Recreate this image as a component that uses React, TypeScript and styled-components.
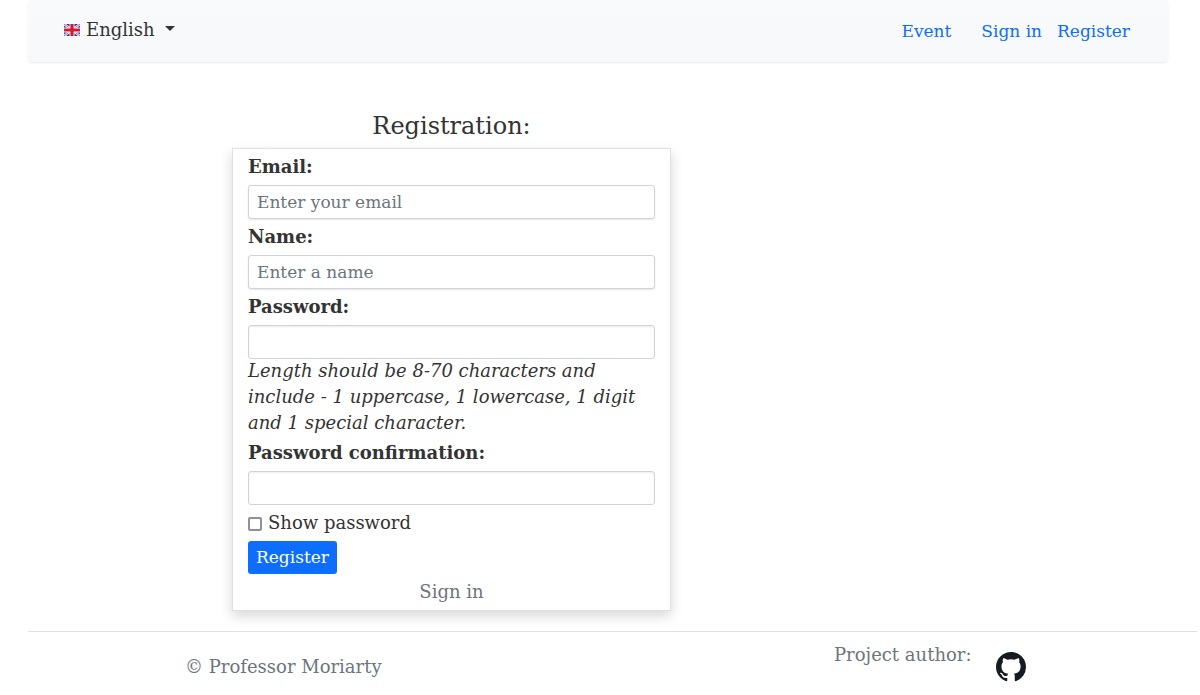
import React, { useState } from "react";
import styled, { createGlobalStyle } from "styled-components";

const GlobalStyle = createGlobalStyle`
  *, *::before, *::after { box-sizing: border-box; }
  body {
    margin: 0;
    background: #fff;
    color: #333;
    font-family: "DejaVu Serif", serif;
    font-size: 18px;
    line-height: 26px;
  }
`;

const Page = styled.div`
  padding-left: 28px;
`;

const Navbar = styled.header`
  display: flex;
  justify-content: space-between;
  align-items: center;
  height: 62px;
  margin-right: 32px;
  padding: 0 38px 0 36px;
  background: linear-gradient(#f9fafb, #f8f9fb 50%);
  border-radius: 4px;
  box-shadow: 0 1px 2px rgba(0, 0, 0, 0.08);
`;

const LanguageButton = styled.button`
  display: flex;
  align-items: center;
  gap: 6px;
  margin-bottom: 3px;
  padding: 0;
  border: 0;
  background: none;
  color: inherit;
  font: inherit;
  cursor: pointer;
`;

const Flag = styled.svg`
  width: 16px;
  height: 12px;
`;

const Caret = styled.span`
  margin: 0 0 2px 4px;
  border: 5px solid transparent;
  border-top-color: #333;
  border-bottom: 0;
`;

const Nav = styled.nav`
  display: flex;
  gap: 15px;
`;

const NavLink = styled.a<{ $spaced?: boolean }>`
  margin-right: ${(p) => (p.$spaced ? "15px" : "0")};
  color: #0d6efd;
  font-size: 17px;
  text-decoration: none;
`;

const Main = styled.main`
  display: grid;
  grid-template-columns: 204fr 439fr 497fr;
  margin: 48px 32px 20px 0;
`;

const Registration = styled.section`
  grid-column: 2;
`;

const Title = styled.h1`
  margin: 0 0 6px;
  font-size: 24px;
  line-height: 32px;
  font-weight: 400;
  text-align: center;
`;

const Card = styled.form`
  display: flex;
  flex-direction: column;
  align-items: stretch;
  gap: 5px;
  padding: 5px 15px;
  border: 1px solid #dee2e6;
  background: #fff;
  box-shadow: 0 5px 12px rgba(0, 0, 0, 0.16);
`;

const Field = styled.div`
  display: flex;
  flex-direction: column;
`;

const Label = styled.label`
  margin-bottom: 5px;
  font-weight: 700;
`;

const Input = styled.input`
  width: 100%;
  height: 34px;
  padding: 0 8px;
  border: 1px solid #ced4da;
  border-radius: 3px;
  background: #fff;
  box-shadow: inset 0 1px 2px rgba(0, 0, 0, 0.08);
  color: inherit;
  font-family: inherit;
  font-size: 17px;
  &::placeholder { color: #6c757d; opacity: 1; }
`;

const RaisedInput = styled(Input)`
  box-shadow: 0 1px 2px rgba(0, 0, 0, 0.1);
`;

const Hint = styled.p`
  margin: -1px 0 -1px;
  font-style: italic;
`;

const CheckRow = styled.label`
  display: flex;
  align-items: center;
  gap: 6px;
`;

const Checkbox = styled.input`
  appearance: none;
  width: 14px;
  height: 14px;
  margin: 2px 0 0;
  border: 2px solid #8f8f9d;
  border-radius: 2px;
  background: #fff;
  &:checked { background: #0d6efd; }
`;

const Submit = styled.button`
  align-self: flex-start;
  height: 33px;
  padding: 0 8px 2px;
  border: 0;
  border-radius: 3px;
  background: #0d6efd;
  color: #fff;
  font-family: inherit;
  font-size: 17px;
  cursor: pointer;
`;

const MutedLink = styled.a`
  align-self: center;
  color: #6c757d;
  text-decoration: none;
`;

const Footer = styled.footer`
  display: grid;
  grid-template-columns: 157fr 649fr 364fr;
  margin-right: 2px;
  padding: 10px 0;
  border-top: 1px solid #dee2e6;
  color: #6c757d;
`;

const Copyright = styled.span`
  grid-column: 2;
  padding-top: 12px;
`;

const Author = styled.div`
  display: flex;
  align-items: flex-start;
  gap: 25px;
  white-space: nowrap;
`;

const GithubLink = styled.a`
  display: flex;
  padding-top: 10px;
  color: #161b22;
`;

function UnitedKingdomFlag() {
  return (
    <Flag viewBox="0 0 16 12" aria-hidden="true">
      <rect width="16" height="12" fill="#0a3b9c" />
      <path d="M0 0l16 12M16 0L0 12" stroke="#fff" strokeWidth="2.4" />
      <path d="M0 0l16 12M16 0L0 12" stroke="#d8203c" strokeWidth="0.8" />
      <path d="M8 0v12M0 6h16" stroke="#fff" strokeWidth="5" />
      <path d="M8 0v12M0 6h16" stroke="#d31735" strokeWidth="3.2" />
    </Flag>
  );
}

function GithubMark() {
  return (
    <svg width="30" height="30" viewBox="0 0 16 16" fill="currentColor" aria-hidden="true">
      <path d="M8 0C3.58 0 0 3.58 0 8c0 3.54 2.29 6.53 5.47 7.59.4.07.55-.17.55-.38 0-.19-.01-.82-.01-1.49-2.01.37-2.53-.49-2.69-.94-.09-.23-.48-.94-.82-1.13-.28-.15-.68-.52-.01-.53.63-.01 1.08.58 1.23.82.72 1.21 1.87.87 2.33.66.07-.52.28-.87.51-1.07-1.78-.2-3.64-.89-3.64-3.95 0-.87.31-1.59.82-2.15-.08-.2-.36-1.02.08-2.12 0 0 .67-.21 2.2.82.64-.18 1.32-.27 2-.27s1.36.09 2 .27c1.53-1.04 2.2-.82 2.2-.82.44 1.1.16 1.92.08 2.12.51.56.82 1.27.82 2.15 0 3.07-1.87 3.75-3.65 3.95.29.25.54.73.54 1.48 0 1.07-.01 1.93-.01 2.2 0 .21.15.46.55.38A8.01 8.01 0 0 0 16 8c0-4.42-3.58-8-8-8z" />
    </svg>
  );
}

export default function App() {
  const [visible, setVisible] = useState(false);
  const passwordType = visible ? "text" : "password";

  return (
    <>
      <GlobalStyle />
      <Page>
        <Navbar>
          <LanguageButton type="button" aria-haspopup="menu">
            <UnitedKingdomFlag />
            English
            <Caret />
          </LanguageButton>
          <Nav>
            <NavLink href="#event" $spaced>Event</NavLink>
            <NavLink href="#sign-in">Sign in</NavLink>
            <NavLink href="#register">Register</NavLink>
          </Nav>
        </Navbar>
        <Main>
          <Registration>
            <Title>Registration:</Title>
            <Card onSubmit={(e) => e.preventDefault()}>
              <Field>
                <Label htmlFor="email">Email:</Label>
                <RaisedInput id="email" type="email" placeholder="Enter your email" />
              </Field>
              <Field>
                <Label htmlFor="name">Name:</Label>
                <RaisedInput id="name" type="text" placeholder="Enter a name" />
              </Field>
              <Field>
                <Label htmlFor="password">Password:</Label>
                <Input id="password" type={passwordType} aria-describedby="password-hint" />
                <Hint id="password-hint">
                  Length should be 8-70 characters and include - 1 uppercase, 1 lowercase, 1 digit and 1 special character.
                </Hint>
              </Field>
              <Field>
                <Label htmlFor="confirmation">Password confirmation:</Label>
                <Input id="confirmation" type={passwordType} />
              </Field>
              <CheckRow>
                <Checkbox type="checkbox" checked={visible} onChange={(e) => setVisible(e.target.checked)} />
                Show password
              </CheckRow>
              <Submit type="submit">Register</Submit>
              <MutedLink href="#sign-in">Sign in</MutedLink>
            </Card>
          </Registration>
        </Main>
        <Footer>
          <Copyright>© Professor Moriarty</Copyright>
          <Author>
            Project author:
            <GithubLink href="#github" aria-label="GitHub">
              <GithubMark />
            </GithubLink>
          </Author>
        </Footer>
      </Page>
    </>
  );
}
